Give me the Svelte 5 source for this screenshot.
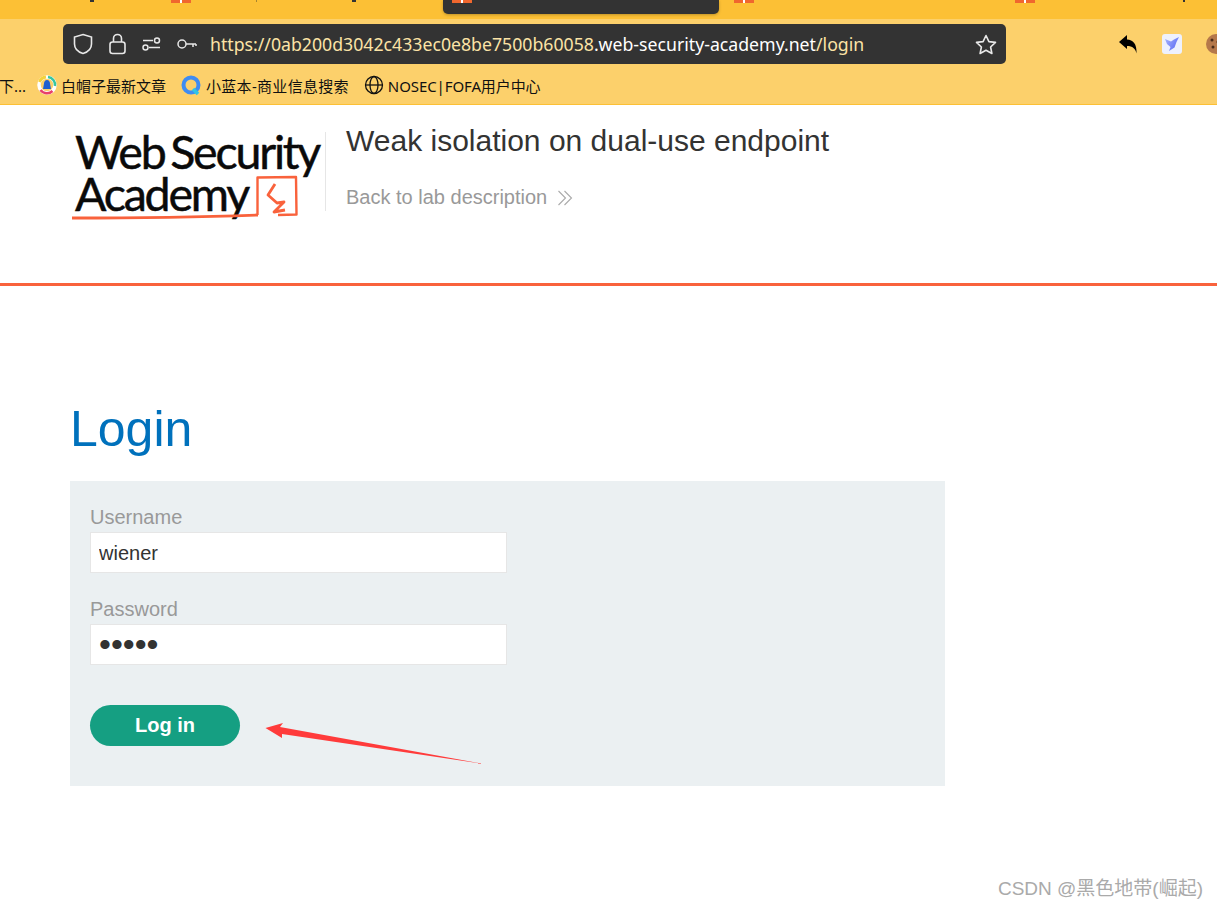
<script>
  const bookmarks = [
    { name: '白帽子最新文章', icon: 'hat' },
    { name: '小蓝本-商业信息搜索', icon: 'q' },
    { name: 'NOSEC|FOFA用户中心', icon: 'globe' }
  ];
  let username = $state('wiener');
  let password = $state('peter');
</script>

<div class="browser">
  <div class="tabbar">
    <span class="gift first"></span>
    <span class="tick one"></span>
    <span class="tick mid"></span>
    <span class="tick two"></span>
    <div class="tab"><span class="gift"></span></div>
    <span class="gift third"></span>
    <span class="gift fourth"></span>
    <span class="tick three"></span>
  </div>

  <div class="toolbar">
    <div class="urlbar">
      <svg class="ico" width="20" height="22" viewBox="0 0 20 22" fill="none" stroke="#e8e8e8" stroke-width="1.6">
        <path d="M10 1.5 18.5 4v7c0 4.500-3.500 8-8.500 9.500C5 19 1.500 15.500 1.500 11V4z" />
      </svg>
      <svg class="ico" width="17" height="22" viewBox="0 0 17 22" fill="none" stroke="#e8e8e8" stroke-width="1.6">
        <rect x="1" y="9" width="15" height="11.500" rx="2.500" />
        <path d="M4.500 9V5.500a4 4 0 0 1 8 0V9" />
      </svg>
      <svg class="ico" width="19" height="14" viewBox="0 0 19 14" fill="none" stroke="#e8e8e8" stroke-width="1.500">
        <path d="M1 3.500h10M7 10.500h11" />
        <circle cx="15" cy="3.500" r="2.500" />
        <circle cx="3.500" cy="10.500" r="2.500" />
      </svg>
      <svg class="ico" width="20" height="12" viewBox="0 0 20 12" fill="none" stroke="#e8e8e8" stroke-width="1.500">
        <circle cx="5" cy="6" r="4" />
        <path d="M9 6h10M16 6v3M19 6v2" />
      </svg>
      <div class="url"><span class="dim">https://0ab200d3042c433ec0e8be7500b60058</span>.web-security-academy.net<span class="dim">/login</span></div>
      <svg class="star" width="22" height="21" viewBox="0 0 22 21" fill="none" stroke="#e8e8e8" stroke-width="1.600" stroke-linejoin="round">
        <path d="M11 1.500 13.900 7.600 20.500 8.400 15.600 13 16.900 19.500 11 16.200 5.100 19.500 6.400 13 1.500 8.400 8.100 7.600z" />
      </svg>
    </div>
    <div class="actions">
      <svg width="20" height="21" viewBox="0 0 20 21">
        <path d="M1 8 9 1v4.500c6 .5 10 4 9.500 14-1-5-4-7.500-9.500-7.500V15z" fill="#000" />
      </svg>
      <svg width="20" height="20" viewBox="0 0 20 20">
        <defs>
          <linearGradient id="bird" x1="0" y1="0" x2="1" y2="0.600">
            <stop offset="0" stop-color="#a9b4fb" />
            <stop offset="1" stop-color="#5f6ff5" />
          </linearGradient>
        </defs>
        <rect width="20" height="20" rx="3" fill="#eef1fd" />
        <path d="M3 5 9 7.500 12 5.500 17 3 14.500 8 12.500 13.500 7 17 8.500 13 5 10z" fill="url(#bird)" />
      </svg>
      <svg class="cookie" width="20" height="20" viewBox="0 0 20 20">
        <circle cx="10" cy="10" r="10" fill="#b5784a" />
        <circle cx="6" cy="6" r="1.500" fill="#4a2c18" />
        <circle cx="12" cy="8" r="1.500" fill="#4a2c18" />
        <circle cx="7" cy="13" r="1.500" fill="#4a2c18" />
        <circle cx="14" cy="14" r="1.500" fill="#4a2c18" />
      </svg>
    </div>
  </div>

  <div class="bookmarks">
    <span class="more">下...</span>
    {#each bookmarks as b}
      <span class="bookmark">
        {#if b.icon === 'hat'}
          <svg width="20" height="20" viewBox="0 0 20 20" fill="none">
            <circle cx="10" cy="10" r="8" stroke="#fff" stroke-width="3.500" />
            <path d="M2.500 7A8 8 0 0 1 9 2" stroke="#f4d23c" stroke-width="3" />
            <path d="M3.500 15a8 8 0 0 0 12 1" stroke="#e8406a" stroke-width="2.500" />
            <path d="M11 2a8 8 0 0 1 7 9" stroke="#37c6a0" stroke-width="2.500" />
            <path d="M10 5c2 0 3 2 3 3.500l1 5.500H6l1-5.500C7 7 8 5 10 5z" fill="#1f5fd0" />
          </svg>
        {:else if b.icon === 'q'}
          <svg width="20" height="21" viewBox="0 0 20 21" fill="none">
            <circle cx="10" cy="10" r="7.500" stroke="#3f8cf2" stroke-width="4" />
            <path d="M12 14l5 5" stroke="#2fc4e8" stroke-width="3.500" />
          </svg>
        {:else}
          <svg width="20" height="20" viewBox="0 0 20 20" fill="none" stroke="#111" stroke-width="1.300">
            <circle cx="10" cy="10" r="8.500" />
            <ellipse cx="10" cy="10" rx="4" ry="8.500" />
            <path d="M1.500 10h17" />
          </svg>
        {/if}
        <span>{b.name}</span>
      </span>
    {/each}
  </div>
</div>

<header class="lab-header">
  <div class="logo">
    <div class="logo-text">Web Security<br />Academy</div>
    <svg class="logo-mark" width="250" height="52" viewBox="0 0 250 52" fill="none" stroke="#f9623c" stroke-linejoin="round">
      <path d="M0 49C60 49 130 48 186 46" stroke-width="2.800" />
      <path d="M185.500 46V8.500L224 8 224.500 45.500 206 46" stroke-width="2.400" />
      <path d="M203 15 196 26 205 34 212 33 202 43 213 41" stroke-width="2.800" />
    </svg>
  </div>
  <div class="lab-title">
    <h2>Weak isolation on dual-use endpoint</h2>
    <a href="#back" class="back">Back to lab description
      <svg width="16" height="16" viewBox="0 0 16 16" fill="none" stroke="#aaa" stroke-width="1.100">
        <path d="M1.500 1 8.500 8 1.500 15M7.500 1 14.500 8 7.500 15" />
      </svg>
    </a>
  </div>
</header>

<main>
  <h1>Login</h1>
  <form class="panel" onsubmit={(e) => e.preventDefault()}>
    <label for="username">Username</label>
    <input id="username" type="text" bind:value={username} />
    <label for="password">Password</label>
    <input id="password" class="pw" type="password" bind:value={password} />
    <button type="submit">Log in</button>
    <svg class="arrow" width="222" height="50" viewBox="0 0 222 50">
      <path d="M.5 13 18 8 15 12 219 49 17 19 17 23z" fill="#ff3b3b" />
    </svg>
  </form>
</main>

<div class="watermark">CSDN @黑色地带(崛起)</div>

<style>
  :global(body) {
    background: #fff;
    font-family: "Liberation Sans", Arial, sans-serif;
    overflow: hidden;
  }

  .browser {
    font-family: "Noto Sans", "Noto Sans CJK SC", sans-serif;
  }

  .tabbar {
    position: relative;
    height: 19px;
    background: #fcc035;
  }
  .tab {
    position: absolute;
    left: 443px;
    top: 0;
    width: 276px;
    height: 14px;
    background: #333;
    border-radius: 0 0 5px 5px;
    box-shadow: 0 1px 3px rgba(0, 0, 0, 0.25);
  }
  .gift {
    position: absolute;
    top: 0;
    left: 9px;
    width: 20px;
    height: 3px;
    background: linear-gradient(90deg, #f0672e 45%, #fff 45%, #fff 55%, #f0672e 55%);
  }
  .gift.first { left: 171px; }
  .gift.third { left: 734px; }
  .gift.fourth { left: 1015px; }
  .tick {
    position: absolute;
    top: 0;
    width: 4px;
    height: 2px;
    background: #333;
  }
  .tick.one { left: 90px; }
  .tick.mid { left: 256px; width: 1px; background: #a8852f; }
  .tick.two { left: 352px; }
  .tick.three { left: 1183px; width: 2px; }

  .toolbar {
    display: flex;
    align-items: flex-start;
    height: 49px;
    padding: 5px 0 0 63px;
    box-sizing: border-box;
    background: #fcd06b;
  }
  .urlbar {
    display: flex;
    flex: none;
    align-items: center;
    width: 943px;
    height: 40px;
    padding: 0 9px 0 10px;
    box-sizing: border-box;
    background: #333;
    border-radius: 5px;
    gap: 16px;
  }
  .url {
    flex: 1;
    margin-left: -3px;
    color: #fff;
    font-size: 17.700px;
    white-space: nowrap;
  }
  .dim {
    color: #fce3a6;
  }
  .actions {
    display: flex;
    flex: none;
    align-items: center;
    gap: 24px;
    height: 40px;
    margin-left: 112px;
  }
  .bookmarks {
    display: flex;
    align-items: center;
    height: 37px;
    padding-bottom: 2px;
    box-sizing: border-box;
    background: #fcd06b;
    color: #111;
    font-size: 15px;
    border-bottom: 1px solid #fcc035;
  }
  .more {
    width: 38px;
    margin-left: -1px;
    flex: none;
  }
  .bookmark {
    display: flex;
    align-items: center;
    gap: 4px;
    margin-right: 15px;
  }
  .bookmark:nth-child(3) {
    gap: 5px;
  }
  .bookmark:nth-child(3) span {
    letter-spacing: 0.3px;
  }
  .bookmark:nth-child(4) span {
    letter-spacing: -0.1px;
  }

  .lab-header {
    display: flex;
    padding: 27px 0 0 72px;
    box-sizing: border-box;
    border-bottom: 3px solid #f9623c;
    height: 181px;
  }
  .logo {
    position: relative;
    width: 253px;
    height: 79px;
    border-right: 1px solid #e6e6e6;
    flex: none;
  }
  .logo-text {
    margin-top: -2px;
    margin-left: 3px;
    color: #0a0a0a;
    font-family: Lato, sans-serif;
    font-size: 46.500px;
    line-height: 42px;
    letter-spacing: -2.200px;
    word-spacing: -4px;
    -webkit-text-stroke: 0.5px #0a0a0a;
    white-space: nowrap;
  }
  .logo-mark {
    position: absolute;
    left: 0;
    top: 37px;
  }
  .lab-title {
    margin-left: 20px;
  }
  h2 {
    margin: 0;
    margin-top: -9px;
    color: #333332;
    font-size: 30px;
    font-weight: 400;
    line-height: 36px;
  }
  .back {
    display: flex;
    align-items: center;
    gap: 10px;
    margin-top: 27px;
    color: #999;
    font-size: 20px;
    text-decoration: none;
  }

  main {
    padding: 115px 0 0 70px;
  }
  h1 {
    margin: 0 0 23px;
    color: #0071bc;
    font-size: 50px;
    font-weight: 400;
    line-height: 57px;
  }
  .panel {
    position: relative;
    display: flex;
    flex-direction: column;
    align-items: flex-start;
    width: 875px;
    height: 305px;
    padding: 25px 20px 0;
    box-sizing: border-box;
    background: #ebf0f2;
  }
  label {
    color: #999;
    font-size: 20px;
    line-height: 23px;
    margin-bottom: 3px;
  }
  input {
    width: 417px;
    height: 41px;
    padding: 1px 8px 0;
    box-sizing: border-box;
    margin: 0 0 25px;
    background: #fff;
    border: 1px solid #e6e6e6;
    color: #333332;
    font-family: inherit;
    font-size: 20px;
    outline: none;
  }
  .pw {
    margin-bottom: 40px;
    padding-top: 0;
    font-size: 34px;
  }
  button {
    width: 150px;
    height: 41px;
    padding: 0;
    border: 0;
    border-radius: 21px;
    background: #159f82;
    color: #fff;
    font-family: inherit;
    font-size: 20px;
    font-weight: 700;
  }
  .arrow {
    position: absolute;
    left: 195px;
    top: 234px;
  }
  .watermark {
    position: absolute;
    right: 14px;
    top: 873px;
    color: #aaa;
    font-family: "Liberation Sans", "Noto Sans CJK SC", sans-serif;
    font-size: 19px;
    white-space: nowrap;
  }
</style>
